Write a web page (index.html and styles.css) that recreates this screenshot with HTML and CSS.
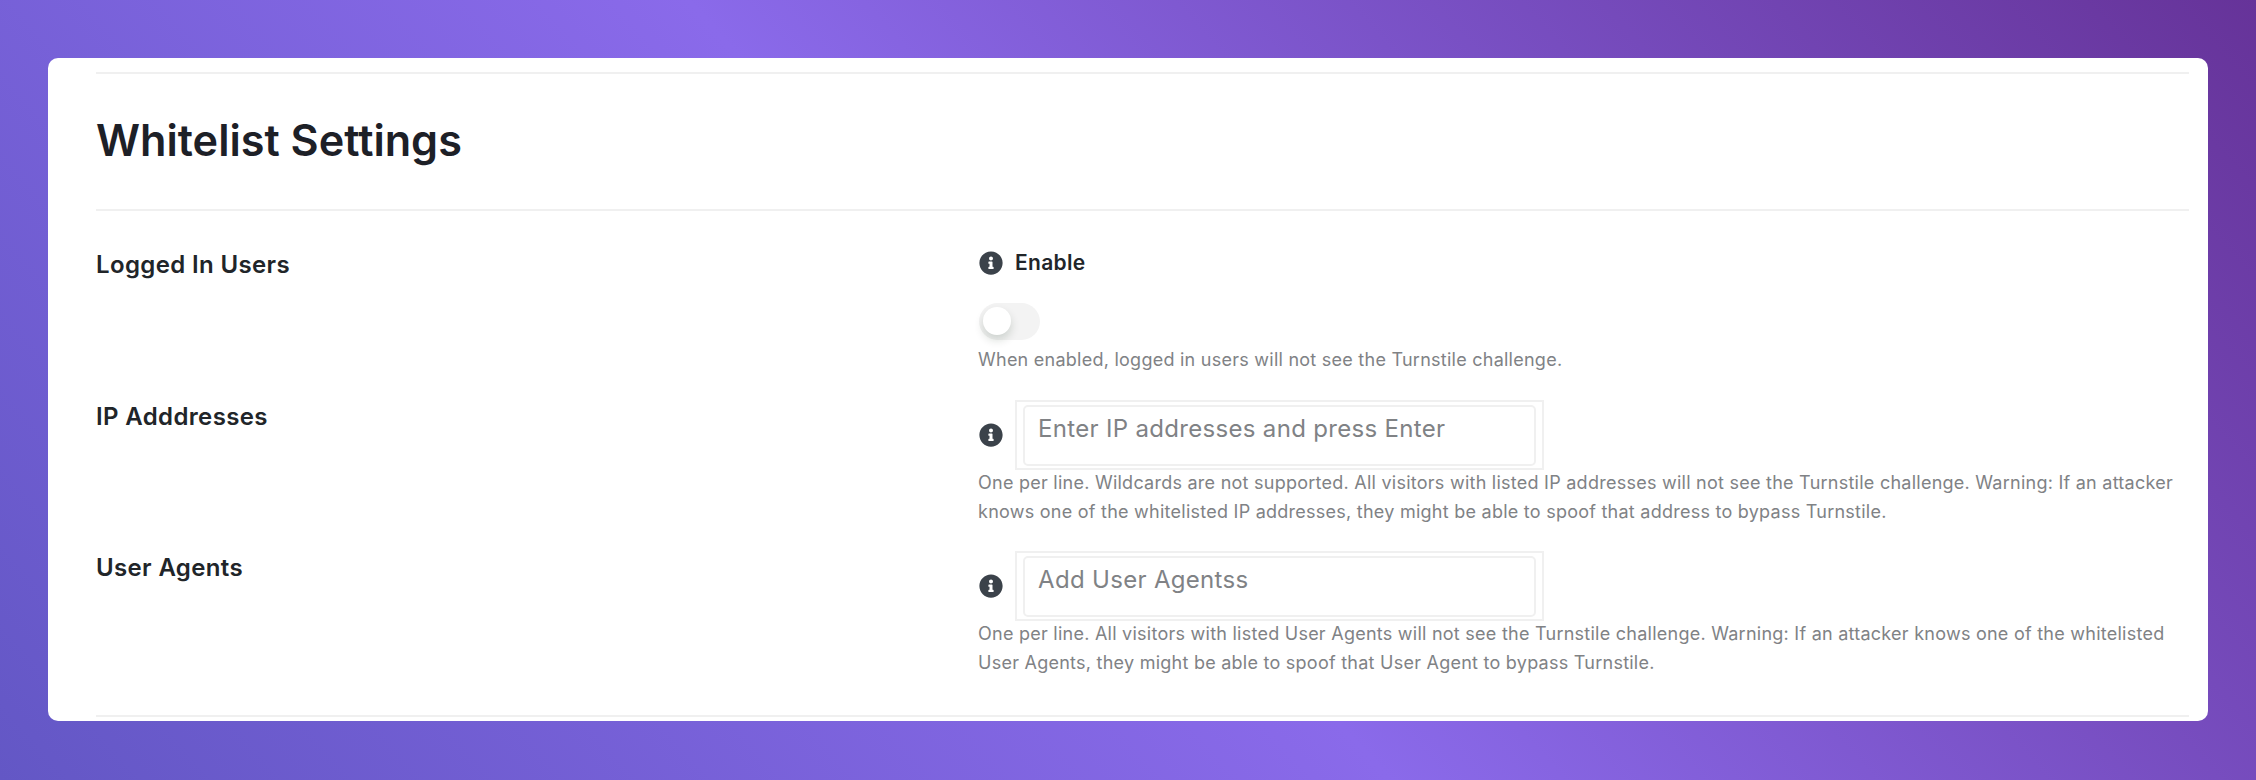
FILE: index.html
```html
<!DOCTYPE html>
<html lang="en">
<head>
  <meta charset="UTF-8">
  <meta name="viewport" content="width=device-width, initial-scale=1.0">
  <title>Whitelist Settings</title>
  <link rel="stylesheet" href="styles.css">
</head>
<body>

  <!-- Info icon, reused in every row -->
  <svg class="sprite" aria-hidden="true">
    <symbol id="info" viewBox="0 0 512 512">
      <path d="M256 8C119 8 8 119 8 256s111 248 248 248 248-111 248-248S393 8 256 8zm0 110c23.200 0 42 18.800 42 42s-18.800 42-42 42-42-18.800-42-42 18.800-42 42-42zm56 254c0 6.600-5.400 12-12 12h-88c-6.600 0-12-5.400-12-12v-24c0-6.600 5.400-12 12-12h12v-64h-12c-6.600 0-12-5.400-12-12v-24c0-6.600 5.400-12 12-12h64c6.600 0 12 5.400 12 12v100h12c6.600 0 12 5.400 12 12v24z"/>
    </symbol>
  </svg>

  <main class="card">
    <div class="header">
      <h2>Whitelist Settings</h2>
    </div>

    <div class="settings">
      <!-- Logged In Users -->
      <div class="setting">
        <h3>Logged In Users</h3>
        <div class="field">
          <div class="field-title">
            <svg class="icon"><use href="#info"/></svg>
            <span>Enable</span>
          </div>
          <label class="switch">
            <input type="checkbox">
            <span class="slider"></span>
          </label>
          <p class="help">When enabled, logged in users will not see the Turnstile challenge.</p>
        </div>
      </div>

      <!-- IP Addresses -->
      <div class="setting">
        <h3>IP Adddresses</h3>
        <div class="field">
          <div class="field-input">
            <svg class="icon"><use href="#info"/></svg>
            <div class="tags">
              <textarea placeholder="Enter IP addresses and press Enter"></textarea>
            </div>
          </div>
          <p class="help">One per line. Wildcards are not supported. All visitors with listed IP addresses will not see the Turnstile challenge. Warning: If an attacker knows one of the whitelisted IP addresses, they might be able to spoof that address to bypass Turnstile.</p>
        </div>
      </div>

      <!-- User Agents -->
      <div class="setting">
        <h3>User Agents</h3>
        <div class="field">
          <div class="field-input">
            <svg class="icon"><use href="#info"/></svg>
            <div class="tags">
              <textarea placeholder="Add User Agentss"></textarea>
            </div>
          </div>
          <p class="help">One per line. All visitors with listed User Agents will not see the Turnstile challenge. Warning: If an attacker knows one of the whitelisted User Agents, they might be able to spoof that User Agent to bypass Turnstile.</p>
        </div>
      </div>
    </div>
  </main>

</body>
</html>
```
FILE: styles.css
```css
* {
  box-sizing: border-box;
}

body {
  margin: 0;
  height: 780px;
  padding: 58px 48px 59px;
  font-family: Inter, sans-serif;
  color: #212529;
  background: linear-gradient(48deg, #6357c5 0%, #8a6aea 47%, #663399 100%);
}

h2,
h3,
p {
  margin: 0;
}

.sprite {
  display: none;
}

.card {
  height: 663px;
  padding: 14px 19px 0 48px;
  background: #fff;
  border-radius: 10px;
}

.header {
  height: 137px;
  padding-top: 39px;
  border-top: 2px solid #f0f0f0;
}

.header h2 {
  font-size: 43.2px;
  line-height: 54px;
  font-weight: 600;
  color: #1d2027;
}

.settings {
  height: 508px;
  padding-top: 37px;
  border-top: 2px solid #f0f0f0;
  border-bottom: 2px solid #f0f0f0;
}

.setting {
  display: grid;
  grid-template-columns: 882px 1fr;
  min-height: 151.4px;
}

.setting:first-child {
  min-height: 152px;
}

.setting h3 {
  padding-top: 2px;
  font-size: 24px;
  line-height: 29px;
  font-weight: 600;
  letter-spacing: 0.36px;
}

.field-title {
  display: flex;
  align-items: center;
  gap: 12px;
  height: 29px;
  margin-bottom: 26px;
  font-size: 21px;
  line-height: 29px;
  font-weight: 600;
  letter-spacing: 0.3px;
}

.icon {
  flex: none;
  width: 24px;
  height: 24px;
  margin-left: 1px;
  fill: #3b424a;
}

.help {
  font-size: 18px;
  line-height: 28.5px;
  letter-spacing: 0.25px;
  color: #808285;
}

/* Toggle */
.switch {
  display: block;
  position: relative;
  width: 61px;
  height: 37px;
  margin: 0 0 6px 1px;
}

.switch input {
  display: none;
}

.slider {
  display: block;
  height: 100%;
  padding: 4px;
  border-radius: 19px;
  background: #f3f3f3;
  cursor: pointer;
}

.slider::before {
  content: "";
  display: block;
  width: 28px;
  height: 28px;
  border-radius: 50%;
  background: #fff;
  box-shadow: 0 5px 10px rgba(0, 35, 11, 0.16);
  transition: transform 0.3s;
}

.switch input:checked + .slider::before {
  transform: translateX(24px);
}

/* Tag inputs */
.field-input {
  display: flex;
  align-items: center;
  gap: 12px;
  height: 70px;
  margin-bottom: -1px;
}

.tags {
  width: 529px;
  height: 70px;
  padding: 3px 6px;
  border: 2px solid #f0f0f0;
}

.tags textarea {
  display: block;
  width: 100%;
  height: 61px;
  padding: 7px 13px;
  border: 2px solid #f0f0f0;
  border-radius: 5px;
  background: #fff;
  font-family: inherit;
  font-size: 24px;
  line-height: 29px;
  letter-spacing: 0.32px;
  outline: none;
  resize: none;
}

.tags textarea::placeholder {
  color: #808285;
}
```
